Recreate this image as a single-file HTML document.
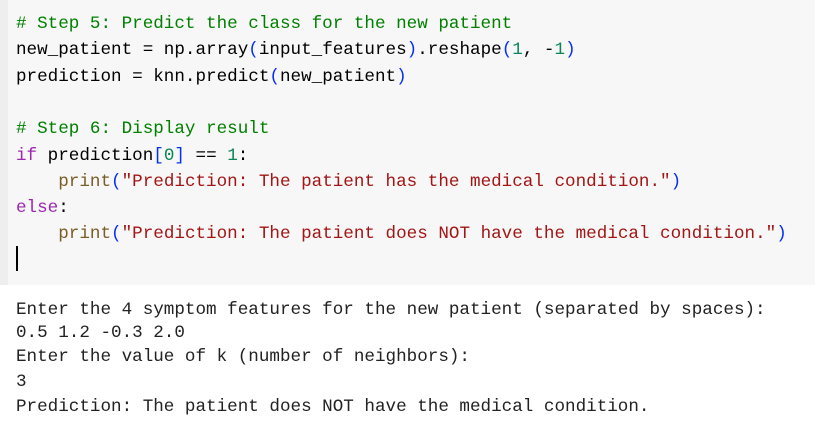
<!DOCTYPE html>
<html><head><style>
html,body{margin:0;padding:0;width:815px;height:428px;background:#fff;overflow:hidden}
body{font-family:"Liberation Mono",monospace;font-size:17.6px;position:relative}
.bg{position:absolute;left:8px;top:0;width:807px;height:285px;background:#f7f7f7}
.strip{position:absolute;left:0;top:0;width:8px;height:285px;background:#eeeeee}
.l{position:absolute;left:16px;white-space:pre;line-height:20px;color:#000}
.c{color:#008000}.k{color:#9c27b0}.p{color:#0431fa}.n{color:#098658}.s{color:#a31515}.f{color:#795e26}
.o{color:#222}
.cur{position:absolute;left:16px;top:246px;width:2px;height:25px;background:#000}
</style></head><body>
<div class="strip"></div><div class="bg"></div>
<div class="l c" style="top:14px"># Step 5: Predict the class for the new patient</div>
<div class="l" style="top:40px">new_patient = np.array<span class="p">(</span>input_features<span class="p">)</span>.reshape<span class="p">(</span><span class="n">1</span>, -<span class="n">1</span><span class="p">)</span></div>
<div class="l" style="top:67px">prediction = knn.predict<span class="p">(</span>new_patient<span class="p">)</span></div>
<div class="l c" style="top:119px"># Step 6: Display result</div>
<div class="l" style="top:146px"><span class="k">if</span> prediction<span class="p">[</span><span class="n">0</span><span class="p">]</span> == <span class="n">1</span>:</div>
<div class="l" style="top:172px">    <span class="f">print</span><span class="p">(</span><span class="s">"Prediction: The patient has the medical condition."</span><span class="p">)</span></div>
<div class="l" style="top:198px"><span class="k">else</span>:</div>
<div class="l" style="top:224px">    <span class="f">print</span><span class="p">(</span><span class="s">"Prediction: The patient does NOT have the medical condition."</span><span class="p">)</span></div>
<div class="cur"></div>
<div class="l o" style="top:300px">Enter the 4 symptom features for the new patient (separated by spaces):</div>
<div class="l o" style="top:323px">0.5 1.2 -0.3 2.0</div>
<div class="l o" style="top:347px">Enter the value of k (number of neighbors):</div>
<div class="l o" style="top:372px">3</div>
<div class="l o" style="top:397px">Prediction: The patient does NOT have the medical condition.</div>
</body></html>
